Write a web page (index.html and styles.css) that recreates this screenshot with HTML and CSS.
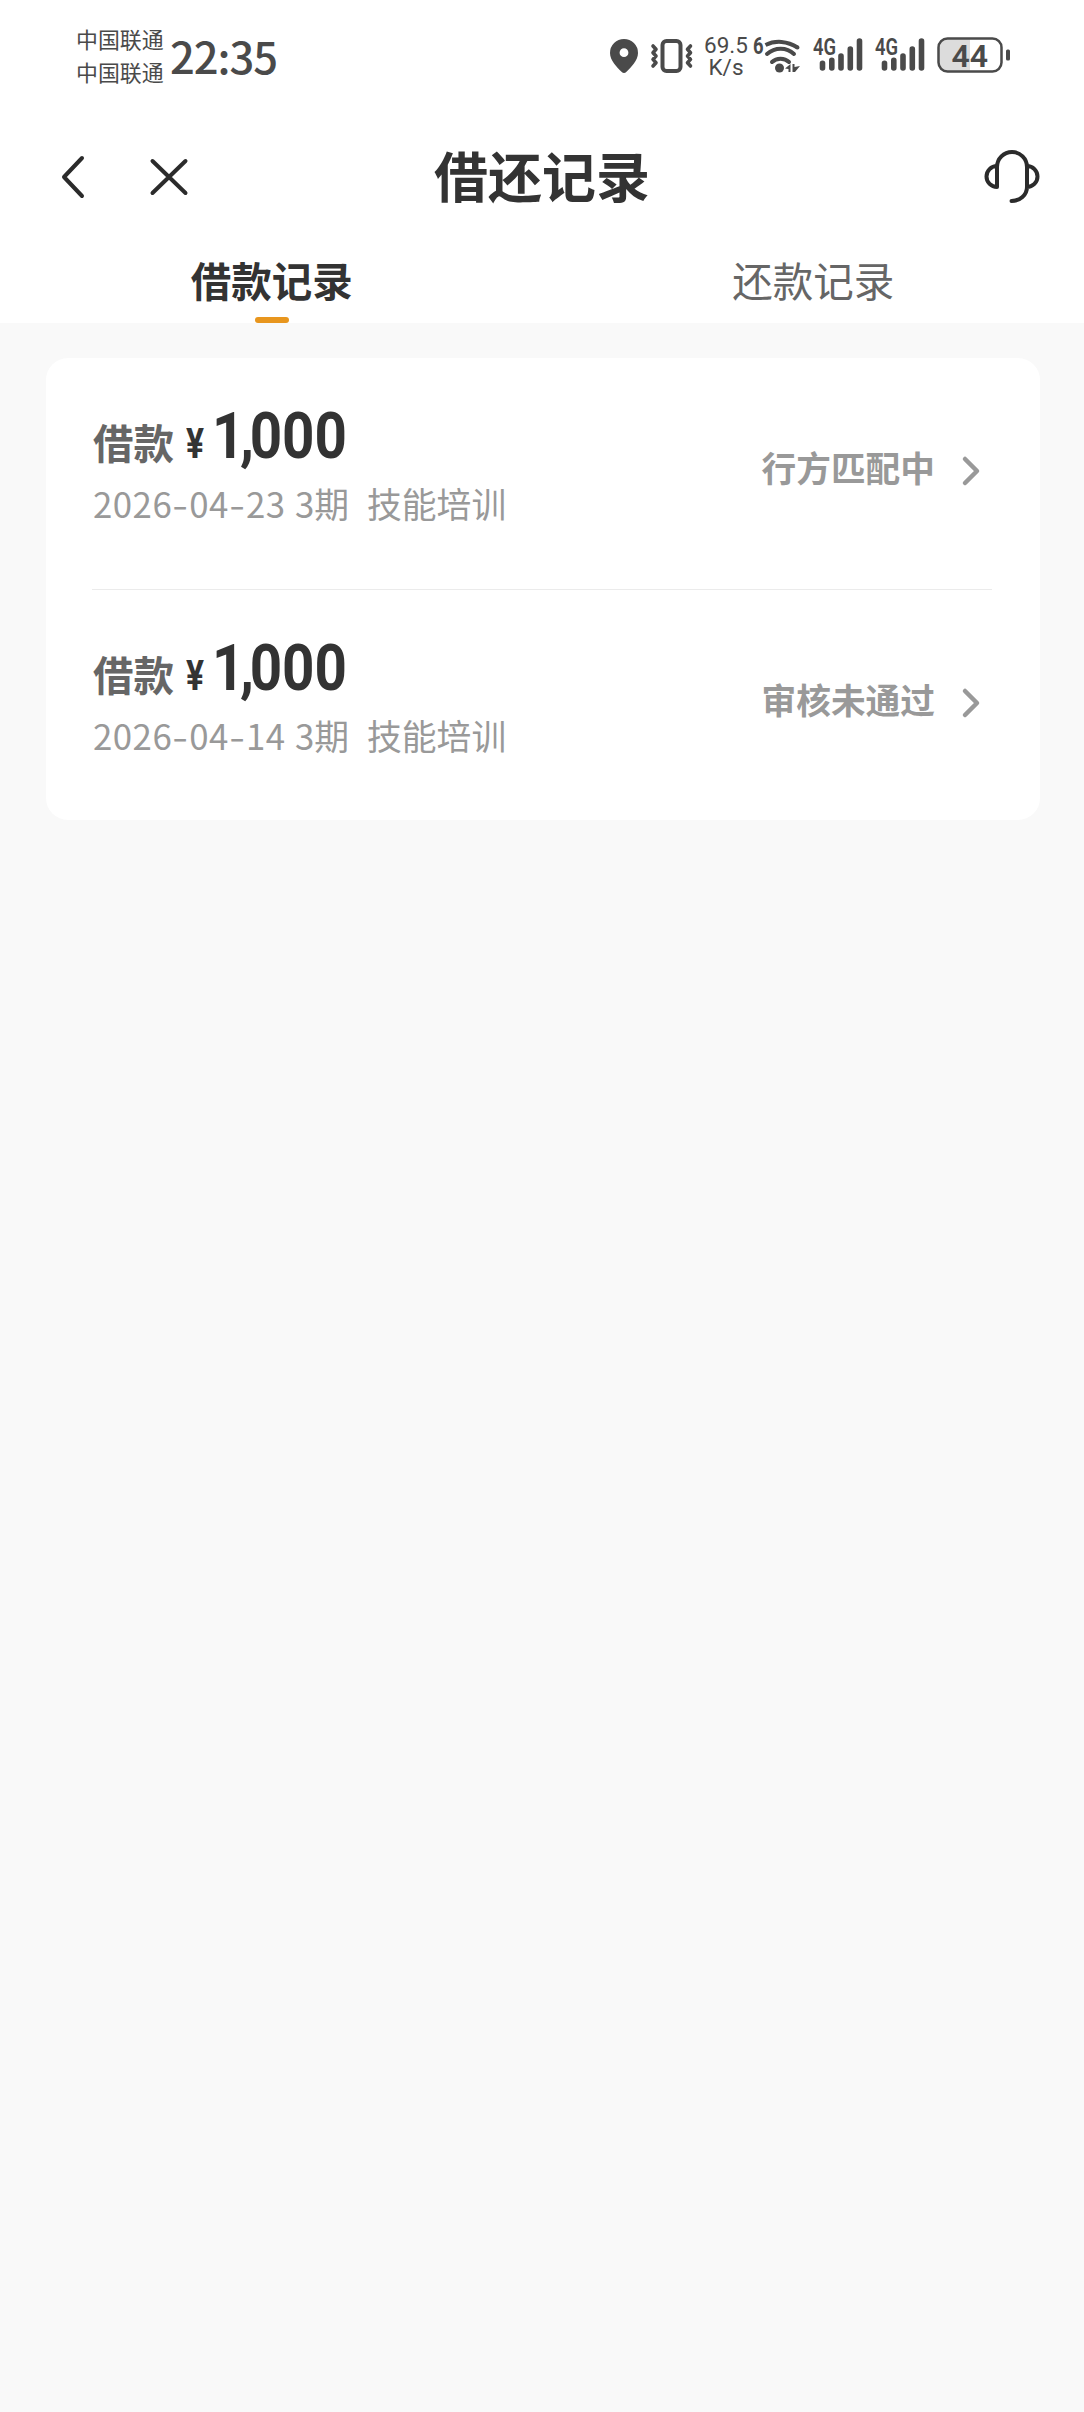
FILE: index.html
```html
<!DOCTYPE html>
<html lang="zh-CN">
<head>
<meta charset="utf-8">
<title>借还记录</title>
<link rel="stylesheet" href="styles.css">
</head>
<body>
<header class="top">
  <div class="statusbar">
    <div class="carriers"><span>中国联通</span><span>中国联通</span></div>
    <time class="clock">22:35</time>
    <div class="indicators">
      <svg class="pin" width="28" height="34" viewBox="0 0 28 34"><path fill-rule="evenodd" d="M14 0a14 14 0 0 1 14 14c0 7.500-7 14-11.500 18.800a3.500 3.500 0 0 1-5 0C7 28 0 21.500 0 14A14 14 0 0 1 14 0zm0 9.300a4.400 4.400 0 1 0 0 8.800 4.400 4.400 0 0 0 0-8.800z"/></svg>
      <svg class="vibrate" width="44" height="34" viewBox="0 0 44 34"><g class="line"><rect x="12.500" y="2" width="18" height="30" rx="4" stroke-width="4"/><path stroke-width="3.600" d="M3 7l3 3.300-3 3.400 3 3.300-3 3.400 3 3.300-3 3.300M40.500 7l-3 3.300 3 3.400-3 3.300 3 3.400-3 3.300 3 3.300"/></g></svg>
      <div class="speed"><span>69.5</span><span>K/s</span></div>
      <svg class="wifi" width="50" height="38" viewBox="0 0 50 38"><text class="six" transform="translate(0 16.500) scale(.8 1)">6</text><g class="line" stroke-width="4"><path stroke-linecap="butt" d="M12.500 8c10-5 22-4 32 2.500"/><path d="M44.400 10.400h.1M14 17c8-7 19.500-7 27 0M19 25c4.500-4.500 12.500-4.500 17 0"/></g><circle cx="26.500" cy="31" r="4.500"/><path d="M32 31.500l5.500-4.500v8h-2v-3zM39.500 27h2v3l5.500-1-5 6h-2.500z"/></svg>
      <svg class="signal" width="52" height="36" viewBox="0 0 52 36"><text class="g4" transform="translate(1 18.500) scale(.8 1)">4G</text><g class="line" stroke-width="5.600"><path d="M10.500 27.300v4.700M19.800 24.300v7.700M29 20v12M38.300 13v19M47.500 5v27"/></g></svg>
      <svg class="signal" width="52" height="36" viewBox="0 0 52 36"><text class="g4" transform="translate(1 18.500) scale(.8 1)">4G</text><g class="line" stroke-width="5.600"><path d="M10.500 27.300v4.700M19.800 24.300v7.700M29 20v12M38.300 13v19M47.500 5v27"/></g></svg>
      <svg class="battery" width="74" height="36" viewBox="0 0 74 36"><path fill="#dcdcdc" d="M10 1.500h23v33H10a8 8 0 0 1-8-8v-17a8 8 0 0 1 8-8z"/><rect class="line" x="1.500" y="1.500" width="63" height="33" rx="9" stroke-width="2.500"/><rect x="69" y="12.500" width="4" height="11" rx="1.500"/><text class="percent" x="14.500" y="29.500">44</text></svg>
    </div>
  </div>
  <nav class="navbar">
    <div class="nav-left">
      <svg width="24" height="44" viewBox="0 0 24 44"><path class="stroke" d="M21 3L3 22l18 19"/></svg>
      <svg width="38" height="38" viewBox="0 0 38 38"><path class="stroke" d="M2.500 3l33 32M35.500 3l-33 32"/></svg>
    </div>
    <h1>借还记录</h1>
    <svg class="service" width="56" height="56" viewBox="0 0 56 56"><path class="stroke" d="M13 38V18a15 15 0 0 1 30 0v20c0 8-7 14-15.500 14M13 17a10.500 10.500 0 0 0 0 21M43 17a10.500 10.500 0 0 1 0 21"/></svg>
  </nav>
  <div class="tabs">
    <div class="tab active">借款记录</div>
    <div class="tab">还款记录</div>
  </div>
</header>
<main class="card">
  <section class="record">
    <div class="info">
      <div class="amount"><span class="kind">借款</span><span class="yen">¥</span><span class="num"><i>1</i><i>,</i>000</span></div>
      <div class="meta"><span class="date">2026<b>-</b>04<b>-</b>23</span><span class="term">3期</span><span>技能培训</span></div>
    </div>
    <span class="state">行方匹配中</span>
    <svg class="arrow" width="20" height="32" viewBox="0 0 20 32"><path d="M3 4l12 12L3 28"/></svg>
  </section>
  <section class="record">
    <div class="info">
      <div class="amount"><span class="kind">借款</span><span class="yen">¥</span><span class="num"><i>1</i><i>,</i>000</span></div>
      <div class="meta"><span class="date">2026<b>-</b>04<b>-</b>14</span><span class="term">3期</span><span>技能培训</span></div>
    </div>
    <span class="state">审核未通过</span>
    <svg class="arrow" width="20" height="32" viewBox="0 0 20 32"><path d="M3 4l12 12L3 28"/></svg>
  </section>
</main>
</body>
</html>
```
FILE: styles.css
```css
* { box-sizing: border-box; }
body {
  margin: 0;
  min-height: 2412px;
  background: #f9f9f9;
  color: #333;
  font-family: "Noto Sans CJK SC", sans-serif;
}
svg { display: block; flex: none; overflow: visible; }
.top { background: #fff; height: 323px; }

.statusbar {
  display: flex;
  height: 112px;
  padding-left: 76px;
  color: #4a4a4a;
  fill: #4a4a4a;
}
.carriers { display: flex; flex-direction: column; width: 94px; padding-top: 22px; font-size: 21.900px; line-height: 33px; white-space: nowrap; }
.clock { font-size: 43.500px; font-weight: 500; letter-spacing: -1px; line-height: 64px; padding-top: 24px; }
.indicators { display: flex; margin-left: auto; padding: 36px 73px 0 0; }
.line { fill: none; stroke: #4a4a4a; stroke-linecap: round; stroke-linejoin: round; }
.pin { margin: 3px 12px 0 0; }
.vibrate { margin: 3px 10px 0 0; }
.speed { display: flex; flex-direction: column; align-items: center; width: 44px; margin: -2px 5px 0 0; font: 400 22.500px/22px Roboto, sans-serif; }
.wifi { margin: 1px 9px 0 0; }
.signal { margin-right: 10px; }
.battery { margin: 1px 0 0 1px; }
.six { font: 700 23px Roboto, sans-serif; }
.g4 { font: 600 23px Roboto, sans-serif; }
.percent { font: 600 32px Roboto, sans-serif; }

.navbar {
  display: grid;
  grid-template-columns: 1fr auto 1fr;
  align-items: center;
  height: 130px;
  padding: 0 44px 0 61px;
}
.nav-left { display: flex; align-items: center; gap: 65px; }
h1 { margin: -4px 17px 0 0; font-size: 54px; font-weight: 700; line-height: 80px; }
.service { justify-self: end; }
.stroke { fill: none; stroke: #2b2b2b; stroke-width: 4; stroke-linecap: round; stroke-linejoin: round; }

.tabs { display: grid; grid-template-columns: 1fr 1fr; height: 81px; padding-left: 1px; }
.tab { display: flex; flex-direction: column; align-items: center; justify-content: space-between; font-size: 40.500px; line-height: 75px; color: #666; }
.tab.active { font-weight: 700; color: #333; }
.tab.active::after { content: ""; width: 34px; height: 6px; border-radius: 3px; background: #e8961e; }

.card { margin: 35px 44px 0 46px; height: 462px; padding: 0 48px 0 46px; border-radius: 22px; background: #fff; }
.record { display: flex; height: 231px; }
.record + .record { border-top: 1px solid #ebebeb; }
.info { flex: 1; padding-top: 38px; }
.amount { display: flex; align-items: baseline; height: 80px; line-height: 80px; white-space: nowrap; }
.kind { width: 93px; margin-left: 1px; font-size: 40.500px; font-weight: 700; color: #666; position: relative; top: 1px; }
.yen { width: 26px; font: 700 42px/80px Roboto, sans-serif; transform: scaleX(.8); transform-origin: left; }
.num { font: 700 65px/80px Roboto, sans-serif; transform: scaleX(.87); transform-origin: left; }
.num i { font-style: normal; margin-right: -5px; }
.meta { display: flex; margin: 2px 0 0 1px; font-size: 34.800px; line-height: 50px; color: #999; white-space: nowrap; }
.date { width: 202px; letter-spacing: .5px; }
.date b { display: inline-block; width: 17px; font-weight: 400; text-align: center; transform: scaleX(1.3); }
.term { width: 72px; }
.state { font-size: 34.700px; font-weight: 700; line-height: 52px; margin-top: 83px; color: #999; }
.arrow { margin: 97px 10px 0 27px; fill: none; stroke: #999; stroke-width: 4.500; stroke-linecap: round; stroke-linejoin: round; }
```
